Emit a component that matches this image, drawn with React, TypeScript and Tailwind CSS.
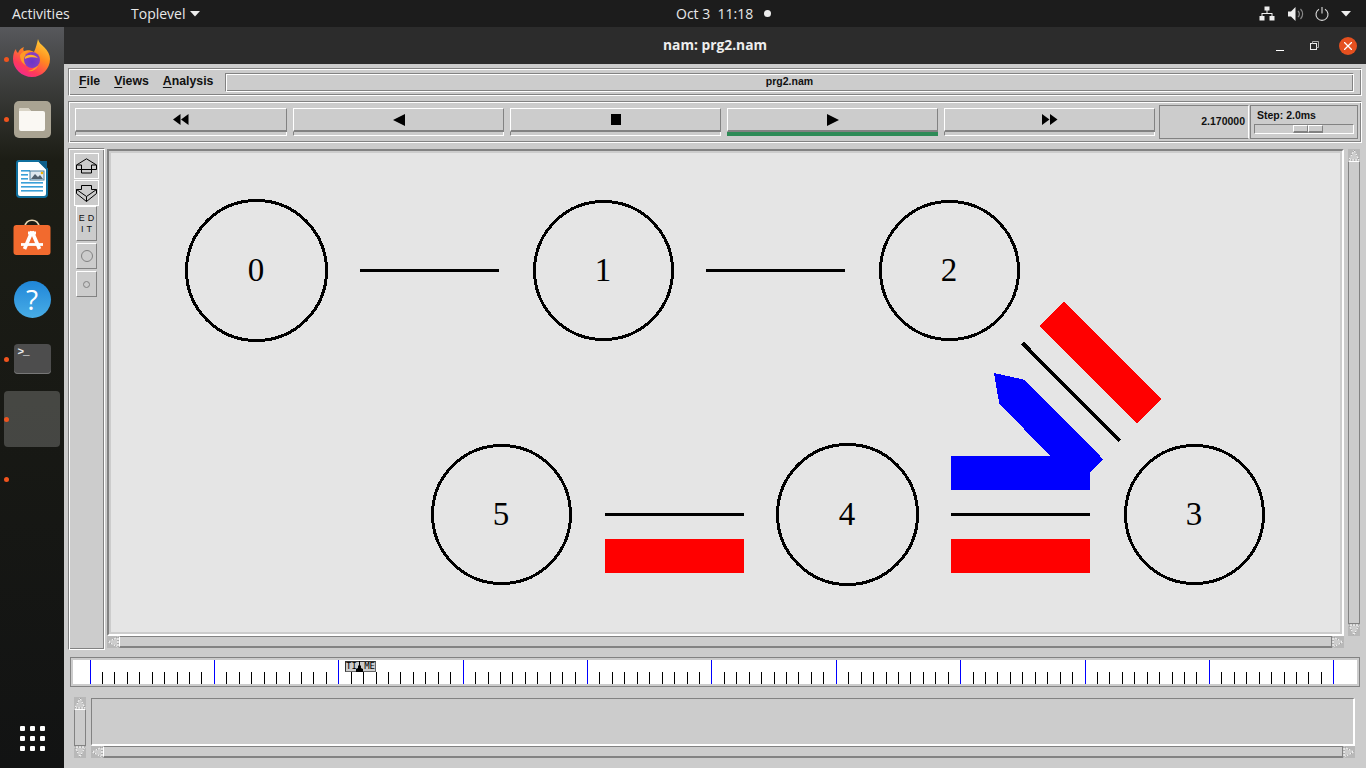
const GROOVE =
  'border border-t-[#828282] border-l-[#828282] border-r-white border-b-white shadow-[inset_1px_1px_0_#fff,inset_-1px_-1px_0_#828282]';
const UI_FONT = 'font-["Liberation_Sans",Arial,sans-serif] font-bold text-[#111]';
const SHELL_FONT = 'font-["Open_Sans",sans-serif]';

const NODES = [
  { id: 0, x: 256.5, y: 270.5, r: 70 },
  { id: 1, x: 603.5, y: 270.5, r: 69 },
  { id: 2, x: 949.5, y: 270.5, r: 69 },
  { id: 3, x: 1194.5, y: 514.5, r: 69 },
  { id: 4, x: 847.5, y: 514.5, r: 70 },
  { id: 5, x: 501.5, y: 514.5, r: 69 },
];

const TICKS = Array.from({ length: 101 }, (_, k) => ({
  x: Math.floor(90 + 12.438 * k) + 0.5,
  major: k % 10 === 0,
}));

// ─── Dock icons ──────────────────────────────────────────────────────────────

function FirefoxIcon() {
  return (
    <svg className="-mt-[2px]" width="40" height="40" viewBox="0 0 40 40">
      <defs>
        <linearGradient id="ff" x1="0.8" y1="0" x2="0.2" y2="1">
          <stop offset="0" stopColor="#ffd43a" />
          <stop offset="0.4" stopColor="#ff8a1f" />
          <stop offset="0.75" stopColor="#ff3a5a" />
          <stop offset="1" stopColor="#f0269a" />
        </linearGradient>
        <radialGradient id="ffp" cx="0.5" cy="0.6" r="0.6">
          <stop offset="0" stopColor="#6a35c8" />
          <stop offset="1" stopColor="#8c3fc0" />
        </radialGradient>
      </defs>
      <path
        d="M26 1c1 4 3 5 6 8 4 4 6 8 6 12 0 10-8 18-18 18S1 31 1 21c0-4 1-8 3-10 0 2 1 3 2 4 1-3 3-5 6-6-1 2-1 3 0 4 3-1 7-1 10 1 2-4 3-9 4-13z"
        fill="url(#ff)"
      />
      <path d="M8 17c2-3 6-5 9-4-3 1-4 3-4 4 2-1 7-2 11 1 3 3 3 7 2 10-2 4-6 6-10 5 5-1 7-3 7-6-3 2-8 2-11-1-3-2-4-6-4-9z" fill="#ff9a26" />
      <circle cx="20" cy="22" r="8" fill="url(#ffp)" />
      <path d="M13 19c3-3 9-3 13 1-4-1-10-1-13 1z" fill="#ffb02e" />
    </svg>
  );
}

function FilesIcon() {
  return (
    <div className="flex h-[37px] w-[37px] items-center justify-center rounded-[5px] bg-[#a9a392]">
      <svg width="28" height="26" viewBox="0 0 28 26">
        <path d="M1 4a2 2 0 0 1 2-2h7l3 3h12a2 2 0 0 1 2 2v16a2 2 0 0 1-2 2H3a2 2 0 0 1-2-2z" fill="#faf8f3" />
        <path d="M1 4a2 2 0 0 1 2-2h7l3 3H1z" fill="#d9d4c6" />
      </svg>
    </div>
  );
}

function WriterIcon() {
  return (
    <svg width="32" height="38" viewBox="0 0 32 38">
      <path d="M3 1h20l8 8v25a3 3 0 0 1-3 3H4a3 3 0 0 1-3-3V3a2 2 0 0 1 2-2z" fill="#fff" stroke="#0f6f9e" strokeWidth="2" />
      <path d="M22 1l9 9V1z" fill="#0f5f8a" />
      <g fill="#3aa0d8">
        <rect x="5" y="10" width="9" height="1.6" />
        <rect x="5" y="14" width="7" height="1.6" />
        <rect x="5" y="18" width="7" height="1.6" />
        <rect x="5" y="22" width="22" height="1.6" />
        <rect x="5" y="26" width="22" height="1.6" />
        <rect x="5" y="30" width="22" height="1.6" />
      </g>
      <rect x="14" y="11" width="14" height="9" fill="#dfe8ee" stroke="#4a7f9e" />
      <path d="M15 19l4-5 3 3 2-2 3 4z" fill="#50606c" />
      <circle cx="26" cy="13" r="1.3" fill="#f4b400" />
    </svg>
  );
}

function StoreIcon() {
  return (
    <svg className="-mt-[4px]" width="38" height="37" viewBox="0 0 38 37">
      <path d="M12 8c0-9 14-9 14 0" fill="none" stroke="#e8d4b0" strokeWidth="1.6" />
      <rect x="0.5" y="6" width="37" height="30" rx="3" fill="#f26a2e" />
      <g stroke="#fff" fill="none">
        <path d="M19 12.5L11.5 30M19 12.5L26.5 30" strokeWidth="3.6" />
        <path d="M15 14h8" strokeWidth="3" />
        <path d="M8 25.5h22" strokeWidth="2.8" />
      </g>
    </svg>
  );
}

function HelpIcon() {
  return (
    <div className="flex h-[37px] w-[37px] items-center justify-center rounded-full bg-gradient-to-b from-[#1f86d8] to-[#48ade6] font-['Open_Sans',sans-serif] text-[28px] leading-none text-white">
      ?
    </div>
  );
}

function TerminalIcon() {
  return (
    <div className="relative h-[30px] w-[37px] rounded-[4px] bg-[#4d4d4d] shadow-[inset_0_-1px_0_#777]">
      <span className="absolute left-[4px] top-[1px] font-['Liberation_Mono',monospace] text-[11px] font-bold leading-[14px] tracking-[-1px] text-[#eee]">
        &gt;_
      </span>
    </div>
  );
}

function Dock() {
  const slot = 'flex h-[60px] items-center justify-center';
  return (
    <div className="relative flex w-[64px] shrink-0 flex-col bg-gradient-to-b from-[#57585c] via-[#1c1d15] via-[18%] to-[#121313]">
      <div className="flex flex-col pt-[2px]">
        <div className={slot}><FirefoxIcon /></div>
        <div className={slot}><FilesIcon /></div>
        <div className={slot}><WriterIcon /></div>
        <div className={slot}><StoreIcon /></div>
        <div className={slot}><HelpIcon /></div>
        <div className={slot}><TerminalIcon /></div>
        <div className={slot}>
          <div className="h-[56px] w-[56px] rounded-[4px] bg-white/20" />
        </div>
      </div>
      {/* running app markers */}
      <span className="absolute left-[4px] top-[30px] h-[5px] w-[5px] rounded-full bg-[#f0541e]" />
      <span className="absolute left-[4px] top-[90px] h-[5px] w-[5px] rounded-full bg-[#f0541e]" />
      <span className="absolute left-[4px] top-[330px] h-[5px] w-[5px] rounded-full bg-[#f0541e]" />
      <span className="absolute left-[4px] top-[390px] h-[5px] w-[5px] rounded-full bg-[#f0541e]" />
      <span className="absolute left-[4px] top-[450px] h-[5px] w-[5px] rounded-full bg-[#f0541e]" />
      <div className="mt-auto mb-[17px] ml-[20px] grid w-[25px] grid-cols-3 gap-[5px]">
        {Array.from({ length: 9 }).map((_, i) => (
          <span key={i} className="h-[5px] w-[5px] rounded-[1px] bg-white" />
        ))}
      </div>
    </div>
  );
}

// ─── Shell bars ──────────────────────────────────────────────────────────────

function TopBar() {
  return (
    <div className={`${SHELL_FONT} relative flex h-[27px] shrink-0 items-center bg-[#1c1c1c] text-[14px] text-[#e8e8e8]`}>
      <span className="ml-[12px] w-[119px]">Activities</span>
      <span>Toplevel</span>
      <svg className="ml-[5px]" width="10" height="6" viewBox="0 0 10 6"><path d="M0 0h10L5 5.5z" fill="#eee" /></svg>
      <div className="absolute left-[676px] top-0 flex h-[27px] items-center">
        <span className="whitespace-pre">Oct 3  11:18</span>
        <span className="ml-[11px] h-[7px] w-[7px] rounded-full bg-[#eee]" />
      </div>
      <div className="ml-auto flex items-center">
        <svg width="16" height="15" viewBox="0 0 16 15" fill="#eee">
          <rect x="5.5" y="0.5" width="5" height="4" />
          <rect x="0.5" y="10" width="5" height="4.5" />
          <rect x="10.5" y="10" width="5" height="4.5" />
          <path d="M7.5 4h1v3h5v3h-1V8H3.5v2h-1V7h5z" />
        </svg>
        <svg className="ml-[13px]" width="16" height="14" viewBox="0 0 16 14">
          <path d="M0 4.5h3L7.5 0v14L3 9.5H0z" fill="#eee" />
          <path d="M10 4a4 4 0 0 1 0 6M12.5 2a7 7 0 0 1 0 10" stroke="#888" strokeWidth="1.2" fill="none" />
        </svg>
        <svg className="ml-[11px]" width="14" height="14" viewBox="0 0 14 14" fill="none" stroke="#ddd" strokeWidth="1.1">
          <path d="M4 2.2a6 6 0 1 0 6 0" />
          <path d="M7 0v6.5" />
        </svg>
        <svg className="ml-[12px] mr-[15px]" width="10" height="6" viewBox="0 0 10 6"><path d="M0 0h10L5 5.5z" fill="#eee" /></svg>
      </div>
    </div>
  );
}

function TitleBar() {
  return (
    <div className={`${SHELL_FONT} relative flex h-[37px] shrink-0 items-center justify-center bg-[#2c2c2c] text-[13.8px] font-bold text-[#eee]`}>
      <span>nam: prg2.nam</span>
      <div className="absolute right-[9px] top-0 flex h-[37px] items-center">
        <span className="mt-[10px] h-px w-[8px] bg-white" />
        <svg className="ml-[26px]" width="9" height="9" viewBox="0 0 9 9" fill="none" stroke="#eee">
          <rect x="0.5" y="2.5" width="6" height="6" />
          <path d="M2.5 2.5v-2h6v6h-2" stroke="#aaa" />
        </svg>
        <div className="ml-[20px] flex h-[18px] w-[18px] items-center justify-center rounded-full bg-[#e5501f]">
          <svg width="8" height="8" viewBox="0 0 8 8" stroke="#fff" strokeWidth="1.3"><path d="M0 0l8 8M8 0L0 8" /></svg>
        </div>
      </div>
    </div>
  );
}

// ─── Nam widgets ─────────────────────────────────────────────────────────────

function MenuItem({ first, rest }: { first: string; rest: string }) {
  return (
    <span>
      <span className="underline decoration-[1px] underline-offset-[2px]">{first}</span>
      {rest}
    </span>
  );
}

function TransportButton({ active, wide, children }: { active?: boolean; wide?: boolean; children: React.ReactNode }) {
  return (
    <div className={`flex h-[28px] shrink-0 flex-col ${wide ? 'w-[212px]' : 'w-[211px]'}`}>
      <div className="flex h-[24px] items-center justify-center border-t border-l border-r border-b-2 border-t-white border-l-white border-r-[#828282] border-b-[#828282]">
        {children}
      </div>
      {active ? (
        <div className="h-[4px] bg-[#2e8b57]" />
      ) : (
        <div className="h-[4px] border-l border-r border-b border-l-[#828282] border-r-white border-b-white" />
      )}
    </div>
  );
}

function ArrowBox({ dir }: { dir: 'up' | 'down' | 'left' | 'right' }) {
  const points = {
    up: '6,1 11,11 1,11',
    down: '1,1 11,1 6,11',
    left: '11,1 11,11 1,6',
    right: '1,1 1,11 11,6',
  }[dir];
  return (
    <svg className="block shrink-0" width="12" height="12" viewBox="0 0 12 12">
      <rect width="12" height="12" fill="#b8b8b8" />
      <polygon points={points} fill="#cccccc" stroke="#ffffff" strokeWidth="1" />
      <polygon points={points} fill="none" stroke="#777777" strokeWidth="1" strokeDasharray="1 2" />
    </svg>
  );
}

function HScroll({ className }: { className: string }) {
  return (
    <div className={`flex items-stretch ${className}`}>
      <ArrowBox dir="left" />
      <div className="flex-1 border-t border-l border-r border-b-2 border-t-[#828282] border-l-white border-r-[#828282] border-b-[#828282]" />
      <ArrowBox dir="right" />
    </div>
  );
}

function VScroll({ className }: { className: string }) {
  return (
    <div className={`flex flex-col items-stretch ${className}`}>
      <ArrowBox dir="up" />
      <div className="flex-1 border border-l-[#828282] border-t-white border-r-[#828282] border-b-[#828282]" />
      <ArrowBox dir="down" />
    </div>
  );
}

function ToolPanel() {
  const big = 'mx-[5px] flex h-[26px] w-[25px] items-center justify-center border border-white';
  const small = 'mx-[7px] flex w-[21px] items-center justify-center border border-t-white border-l-white border-r-[#828282] border-b-[#828282]';
  return (
    <div className={`${GROOVE} flex h-[502px] w-[37px] shrink-0 flex-col pt-[4px]`}>
      <div className={big}>
        <svg width="21" height="16" viewBox="0 0 21 16" fill="none" stroke="#000">
          <path d="M10.5 0.8L0.5 7h5v4.5h10V7h5z" />
          <path d="M0.5 7v4.5h20V7" />
          <path d="M5.5 11.5v3.5h10v-3.5" />
        </svg>
      </div>
      <div className={`${big} mt-[1px]`}>
        <svg width="21" height="17" viewBox="0 0 21 17" fill="none" stroke="#000">
          <path d="M5.5 0.5h10v4h5v4l-10 8-10-8v-4h5z" />
          <path d="M0.5 4.5l10 7 10-7M10.5 11.5v5" />
        </svg>
      </div>
      <div className={`${small} h-[35px] flex-col font-['Liberation_Sans',sans-serif] text-[9px] font-normal leading-[11px] tracking-[3px] text-[#111]`}>
        <span className="pl-[3px]">ED</span>
        <span className="pl-[3px]">IT</span>
      </div>
      <div className={`${small} mt-[2px] h-[26px]`}>
        <span className="h-[12px] w-[12px] rounded-full border border-[#828282]" />
      </div>
      <div className={`${small} mt-[2px] h-[26px]`}>
        <span className="h-[7px] w-[7px] rounded-full border border-[#828282]" />
      </div>
    </div>
  );
}

function NetworkCanvas() {
  return (
    <div className="h-[487px] border-2 border-t-[#828282] border-l-[#828282] border-r-white border-b-white">
      <div className="h-full border-2 border-[#cccccc] bg-[#e5e5e5]">
        <svg className="block" width="1229" height="479" viewBox="111 153 1229 479">
          <g shapeRendering="crispEdges">
            <rect x="605" y="539" width="139" height="34" fill="#ff0000" />
            <rect x="951" y="539" width="139" height="34" fill="#ff0000" />
            <polygon points="1064,302 1161.7,399.3 1137,424 1039.3,326.3" fill="#ff0000" />
            <polygon
              points="994,373 1024,379.7 1103,459 1090,472 1090,490 951,490 951,456 1050.7,456 999.3,404"
              fill="#0000ff"
            />
          </g>
          <g stroke="#000" strokeWidth="3" shapeRendering="crispEdges">
            <line x1="360" y1="270" x2="499" y2="270" />
            <line x1="706" y1="270" x2="845" y2="270" />
            <line x1="605" y1="514" x2="744" y2="514" />
            <line x1="951" y1="514" x2="1090" y2="514" />
            <line x1="1022.5" y1="343" x2="1120" y2="441" strokeWidth="3.6" />
          </g>
          {NODES.map((n) => (
            <g key={n.id}>
              <circle cx={n.x} cy={n.y} r={n.r} fill="none" stroke="#000" strokeWidth="3" shapeRendering="crispEdges" />
              <text
                x={n.x - 0.5}
                y={n.y + 10}
                textAnchor="middle"
                fontSize="33"
                fontWeight="400"
                fontFamily="'Liberation Serif', serif"
                fill="#000"
              >
                {n.id}
              </text>
            </g>
          ))}
        </svg>
      </div>
    </div>
  );
}

function TimeStrip() {
  return (
    <div className="relative ml-[2px] mt-[7px] h-[30px] w-[1290px] border border-[#828282] p-[2px]">
      <svg className="block" width="1284" height="24" viewBox="73 660 1284 24">
        <rect x="73" y="660" width="1284" height="24" fill="#fff" />
        {TICKS.map((t) => (
          <line
            key={t.x}
            x1={t.x}
            x2={t.x}
            y1={t.major ? 660 : 672}
            y2={684}
            stroke={t.major ? '#0000ff' : '#000'}
            strokeWidth="1"
            shapeRendering="crispEdges"
          />
        ))}
      </svg>
      {/* time marker */}
      <div className="absolute left-[274px] top-[3px] flex h-[11px] w-[31px] items-center justify-between border border-t-[#333] border-l-[#333] border-r-[#666] border-b-[#666] bg-[#cccccc] font-['DejaVu_Sans_Mono',monospace] text-[9px] font-normal leading-none text-black">
        <span>TI</span>
        <span>ME</span>
        <svg className="absolute left-[10px] top-[-1px]" width="7" height="11" viewBox="0 0 7 11" fill="#000">
          <path d="M3 0h1v4l1 1v2l2 1v3H0V8l2-1V5l1-1z" />
        </svg>
      </div>
    </div>
  );
}

export default function App() {
  return (
    <div className="flex h-[768px] w-[1366px] flex-col overflow-hidden">
      <TopBar />
      <div className="flex min-h-0 flex-1">
        <Dock />
        <div className="flex min-w-0 flex-1 flex-col">
          <TitleBar />
          <div className={`${UI_FONT} flex-1 bg-[#cccccc] px-[4px] pt-[4px]`}>
            {/* menu */}
            <div className={`${GROOVE} flex h-[28px] items-center pl-[10px] pr-[7px] text-[12.3px]`}>
              <div className="mb-[2px] flex w-[146px] gap-[14px]">
                <MenuItem first="F" rest="ile" />
                <MenuItem first="V" rest="iews" />
                <MenuItem first="A" rest="nalysis" />
              </div>
              <div className={`${GROOVE} flex h-[19px] flex-1 items-center justify-center text-[10.5px]`}>
                prg2.nam
              </div>
            </div>

            {/* transport controls */}
            <div className={`${GROOVE} mt-[5px] flex h-[42px] items-center pl-[6px]`}>
              <div className="flex shrink-0 gap-[6px]">
                <TransportButton wide>
                  <svg width="16" height="11" viewBox="0 0 16 11" fill="#000"><path d="M7.5 0v11L0 5.5zM15.5 0v11L8 5.5z" /></svg>
                </TransportButton>
                <TransportButton>
                  <svg width="12" height="12" viewBox="0 0 12 12" fill="#000"><path d="M12 0v12L0 6z" /></svg>
                </TransportButton>
                <TransportButton>
                  <svg width="10" height="11" viewBox="0 0 10 11" fill="#000"><rect width="10" height="11" /></svg>
                </TransportButton>
                <TransportButton active>
                  <svg width="12" height="12" viewBox="0 0 12 12" fill="#000"><path d="M0 0v12l12-6z" /></svg>
                </TransportButton>
                <TransportButton>
                  <svg width="16" height="11" viewBox="0 0 16 11" fill="#000"><path d="M0 0v11l7.5-5.5zM8 0v11l7.5-5.5z" /></svg>
                </TransportButton>
              </div>
              <div className="ml-[4px] flex h-[34px] w-[90px] shrink-0 items-center justify-end border border-t-[#828282] border-l-[#828282] border-r-white border-b-[#828282] pr-[3px] text-[10.5px]">
                2.170000
              </div>
              <div className="ml-[1px] flex h-[34px] w-[108px] shrink-0 flex-col border border-[#828282] px-[3px] pt-[3px] text-[10.5px] leading-[13px]">
                <span className="pl-[3px]">Step: 2.0ms</span>
                <div className="mt-[2px] flex h-[10px] w-[100px] border border-t-[#828282] border-l-[#828282] border-r-white border-b-white pl-[38px]">
                  <span className="h-full w-[15px] border-t border-l border-r border-b-2 border-t-white border-l-white border-r-[#828282] border-b-[#828282]" />
                  <span className="h-full w-[15px] border-t border-l border-r border-b-2 border-t-white border-l-white border-r-[#828282] border-b-[#828282]" />
                </div>
              </div>
            </div>

            {/* main view */}
            <div className="mt-[5px] flex h-[502px]">
              <ToolPanel />
              <div className="ml-[2px] mt-[1px] w-[1237px]">
                <NetworkCanvas />
                <HScroll className="h-[12px]" />
              </div>
              <VScroll className="ml-[4px] mt-[1px] h-[487px] w-[12px]" />
            </div>

            <TimeStrip />

            {/* annotation pane */}
            <div className="ml-[6px] mt-[10px] flex">
              <VScroll className="h-[61px] w-[12px]" />
              <div className="ml-[5px] w-[1264px]">
                <div className="mt-[1px] h-[48px] border border-r-2 border-b-2 border-t-[#828282] border-l-[#828282] border-r-white border-b-white" />
                <HScroll className="h-[12px]" />
              </div>
            </div>
          </div>
        </div>
      </div>
    </div>
  );
}
